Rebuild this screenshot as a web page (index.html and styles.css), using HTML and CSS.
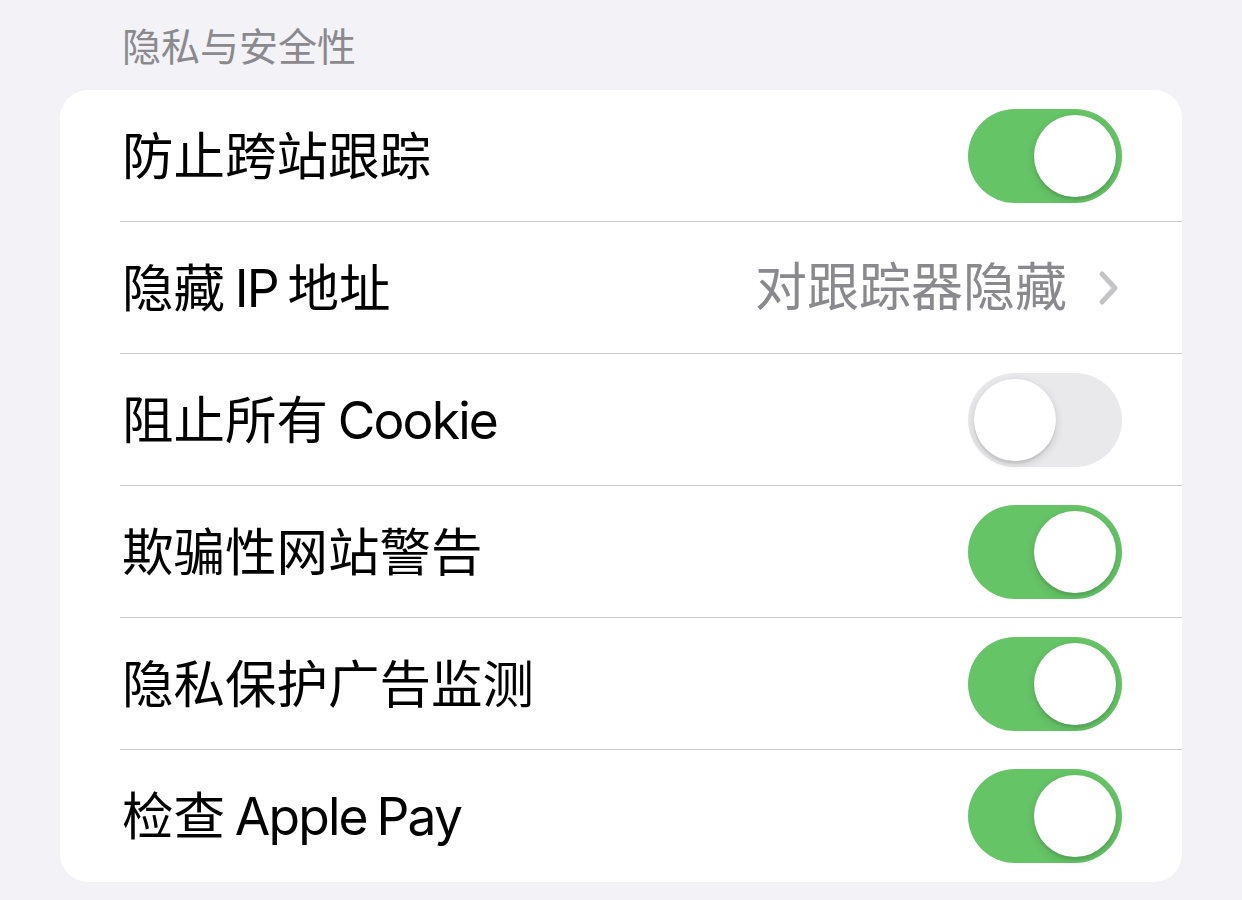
FILE: index.html
```html
<!DOCTYPE html>
<html lang="zh-CN">
<head>
<meta charset="utf-8">
<title>隐私与安全性</title>
<link rel="stylesheet" href="styles.css">
</head>
<body>
<div class="section-title">隐私与安全性</div>
<div class="card">
  <div class="row">
    <span class="label">防止跨站跟踪</span>
    <span class="toggle on"><span class="knob"></span></span>
  </div>
  <div class="row">
    <span class="label">隐藏<span class="latin"> IP </span>地址</span>
    <span class="detail">
      <span class="value">对跟踪器隐藏</span>
      <svg class="chevron" width="22" height="36" viewBox="0 0 22 36"><path d="M4 4 L17 18 L4 32" fill="none" stroke="#c4c4c7" stroke-width="5" stroke-linecap="round" stroke-linejoin="round"/></svg>
    </span>
  </div>
  <div class="row">
    <span class="label">阻止所有<span class="latin"> Cookie</span></span>
    <span class="toggle off"><span class="knob"></span></span>
  </div>
  <div class="row">
    <span class="label">欺骗性网站警告</span>
    <span class="toggle on"><span class="knob"></span></span>
  </div>
  <div class="row">
    <span class="label">隐私保护广告监测</span>
    <span class="toggle on"><span class="knob"></span></span>
  </div>
  <div class="row last">
    <span class="label">检查<span class="latin"> Apple Pay</span></span>
    <span class="toggle on"><span class="knob"></span></span>
  </div>
</div>
</body>
</html>
```
FILE: styles.css
```css
html, body {
  margin: 0;
  padding: 0;
  background: #f2f2f7;
  font-family: Inter, "Noto Sans CJK SC", sans-serif;
  -webkit-font-smoothing: antialiased;
}

.section-title {
  padding: 23px 0 0 122px;
  height: 48px;
  line-height: 48px;
  font-size: 39px;
  color: #8a8a8e;
  margin-bottom: 19px;
}

.card {
  margin: 0 60px;
  background: #ffffff;
  border-radius: 28px;
  overflow: hidden;
}

.row {
  margin-left: 60px;
  padding: 0 60px 0 2px;
  height: 131px;
  border-bottom: 1px solid #c8c8cb;
  display: flex;
  align-items: center;
  justify-content: space-between;
}

.row.last {
  border-bottom: none;
  height: 132px;
}

.label {
  font-size: 51.5px;
  color: #000000;
  line-height: 60px;
}

.latin {
  letter-spacing: -1.8px;
  word-spacing: -3px;
}

.detail {
  display: flex;
  align-items: center;
  gap: 31px;
}

.value {
  font-size: 52px;
  color: #8a8a8e;
  line-height: 60px;
}

.chevron {
  display: block;
  margin-right: 2px;
}

.toggle {
  position: relative;
  width: 154px;
  height: 94px;
  border-radius: 47px;
  display: block;
}

.toggle.on {
  background: #65c466;
}

.toggle.off {
  background: #e9e9eb;
}

.knob {
  position: absolute;
  top: 6px;
  width: 82px;
  height: 82px;
  border-radius: 50%;
  background: #ffffff;
  box-shadow: 0 3px 8px rgba(0, 0, 0, 0.15), 0 3px 1px rgba(0, 0, 0, 0.06);
}

.toggle.on .knob {
  right: 6px;
}

.toggle.off .knob {
  left: 6px;
}
```
